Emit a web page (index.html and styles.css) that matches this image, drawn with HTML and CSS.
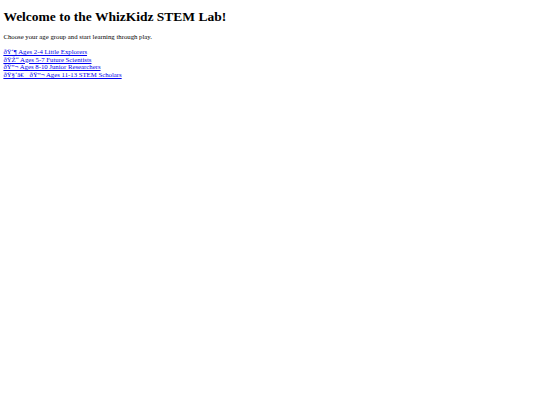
FILE: index.html
```html
<!DOCTYPE html>
<html lang="en">
<head>
<meta charset="utf-8">
<title>WhizKidz STEM Lab</title>
<link rel="stylesheet" href="styles.css">
</head>
<body class="page">
<h1 class="title">Welcome to the WhizKidz STEM Lab!</h1>
<p class="intro">Choose your age group and start learning through play.</p>
<nav class="groups">
<a class="group-link" href="#little">ðŸ‘¶ Ages 2-4 Little Explorers</a>
<a class="group-link" href="#future">ðŸŽ“ Ages 5-7 Future Scientists</a>
<a class="group-link" href="#junior">ðŸ”¬ Ages 8-10 Junior Researchers</a>
<a class="group-link" href="#scholars">ðŸ§‘â€&#x8D;ðŸ”¬ Ages 11-13 STEM Scholars</a>
</nav>
</body>
</html>
```
FILE: styles.css
```css
html {
  background: #ffffff;
}
.page {
  margin: 3.375px;
  font-family: "Liberation Serif", "Times New Roman", serif;
  font-size: 6.75px;
  line-height: 7.7px;
  color: #000000;
}
.title {
  font-size: 13.5px;
  line-height: 15.5px;
  font-weight: bold;
  margin: 6px 0 8px;
}
.intro {
  margin: 0 0 7.5px;
}
.groups {
  display: flex;
  flex-direction: column;
  align-items: flex-start;
}
.group-link {
  color: #0000ee;
  text-decoration: underline;
}
```
